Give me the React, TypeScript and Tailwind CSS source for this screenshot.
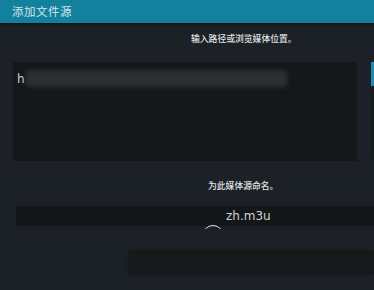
const cjk = "font-['Noto_Sans_CJK_SC','Noto_Sans',sans-serif]";

export default function App() {
  return (
    <div className={`relative h-[290px] w-[374px] overflow-hidden bg-[#1b2126] ${cjk}`}>
      {/* header */}
      <div className="flex h-[23px] items-center bg-[#13809e] pl-[12px] shadow-[0_1px_3px_rgba(0,0,0,0.6)]">
        <span className="text-[11.5px] leading-none tracking-[0.5px] text-[#d8e6ea]">添加文件源</span>
      </div>

      {/* path section */}
      <div className="flex h-[30px] items-center pl-[191px] pt-[2px]">
        <span className="text-[8.8px] font-medium leading-none text-[#e2e4e5]">输入路径或浏览媒体位置。</span>
      </div>

      <div className="mt-[9px] flex">
        <div className="ml-[13px] h-[99px] w-[344px] shrink-0 bg-[#141819] pt-[8px]">
          <div className="flex items-center">
            <span className="ml-[4px] font-['DejaVu_Sans',sans-serif] text-[12px] leading-none text-[#d0d0d0]">h</span>
            <div className="ml-[1px] h-[17px] w-[261px] rounded-[3px] bg-[#2c2f31] blur-[2px]" />
          </div>
        </div>
        <div className="ml-[14px] flex flex-col">
          <div className="h-[24px] w-[6px] bg-[#1a8db0]" />
          <div className="mt-[3px] h-[70px] w-[6px] bg-[#171c1f]" />
        </div>
      </div>

      {/* name section */}
      <div className="flex h-[45px] items-center pl-[208px] pt-[6px]">
        <span className="text-[8.8px] font-medium leading-none text-[#e2e4e5]">为此媒体源命名。</span>
      </div>

      <div className="relative ml-[16px] flex h-[20px] items-center bg-[#141718] pl-[210px]">
        <span className="font-['DejaVu_Sans',sans-serif] text-[12px] leading-none text-[#cfd2d3]">zh.m3u</span>
        <div className="absolute left-[187px] top-[19px] h-[4px] w-[20px] overflow-hidden">
          <div className="h-[20px] w-[20px] rounded-full border-t-[1.5px] border-[#e8e8e8]" />
        </div>
      </div>

      <div className="ml-[129px] mt-[25px] h-[23px] bg-[#15191a] shadow-[0_0_3px_rgba(0,0,0,0.4)]" />
    </div>
  );
}
